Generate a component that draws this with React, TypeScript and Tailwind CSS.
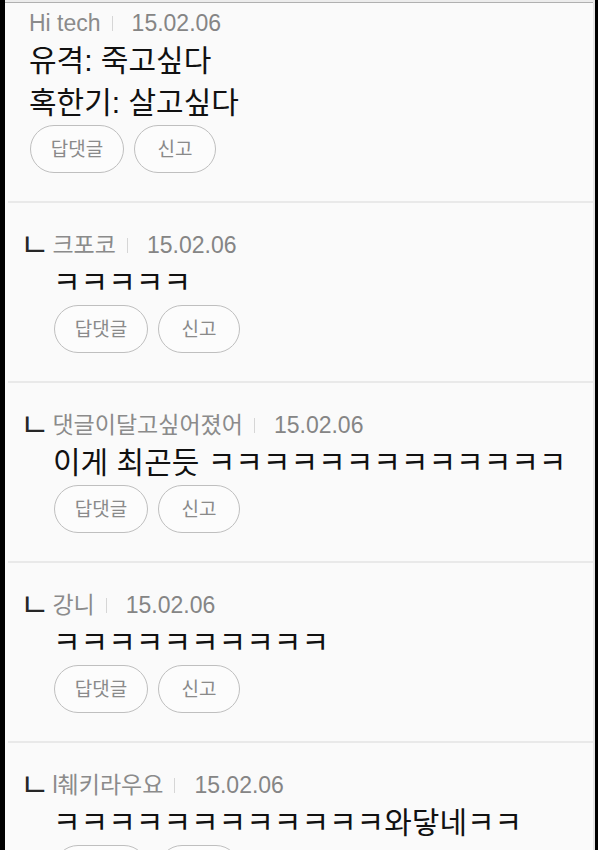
import React from 'react';

type Comment = {
  id: number;
  reply: boolean;
  name: string;
  date: string;
  lines: string[];
};

const comments: Comment[] = [
  { id: 1, reply: false, name: 'Hi tech', date: '15.02.06', lines: ['유격: 죽고싶다', '혹한기: 살고싶다'] },
  { id: 2, reply: true, name: '크포코', date: '15.02.06', lines: ['ㅋㅋㅋㅋㅋ'] },
  { id: 3, reply: true, name: '댓글이달고싶어졌어', date: '15.02.06', lines: ['이게 최곤듯 ' + 'ㅋ'.repeat(13)] },
  { id: 4, reply: true, name: '강니', date: '15.02.06', lines: ['ㅋ'.repeat(10)] },
  { id: 5, reply: true, name: 'l췌키라우요', date: '15.02.06', lines: ['ㅋ'.repeat(12) + '와닿네ㅋㅋ'] },
];

const PillButton = ({ label, width }: { label: string; width: string }) => (
  <button
    className={`${width} h-[48px] rounded-full border-[1.5px] border-[#bfbfbf] bg-[#fcfcfc] text-[19px] leading-none text-[#8a8a8a]`}
  >
    {label}
  </button>
);

const CommentRow = ({ c, first }: { c: Comment; first: boolean }) => (
  <div className={`${first ? 'pt-[6px] pl-[24px]' : 'pt-[28px] pl-[15px]'} pb-[28px]`}>
    {/* meta line */}
    <div className="flex items-center text-[23px] leading-[28px] whitespace-pre">
      {c.reply && <span className="text-[32px] text-[#262626] mr-[3px]">ㄴ</span>}
      <span className="text-[#8b8b8b]">{c.name}</span>
      <span className="inline-block w-px h-[15px] bg-[#d6d6d6] ml-[11px] mr-[19px]" />
      <span className="text-[#858585]">{c.date}</span>
    </div>

    <div className={c.reply ? 'ml-[33px]' : ''}>
      <div className="mt-[3px] text-[30px] leading-[42px] text-[#111111] whitespace-pre">
        {c.lines.map((l, i) => (
          <div key={i}>{l}</div>
        ))}
      </div>
      <div className="mt-px flex gap-[10px] ml-px">
        <PillButton label="답댓글" width="w-[94px]" />
        <PillButton label="신고" width="w-[82px]" />
      </div>
    </div>
  </div>
);

export default function App() {
  return (
    <div
      className="w-[598px] h-[850px] overflow-hidden bg-black pl-[5px] pr-[3px]"
      style={{ fontFamily: "'Liberation Sans', 'Noto Sans CJK KR', sans-serif" }}
    >
      <div className="h-full bg-[#fafafa] border-r-2 border-[#e6e6e6]">
        <div className="h-[2px] bg-[#ececec]" />
        <div className="border-t border-[#b0b0b0]">
          {comments.map((c, i) => (
            <div key={c.id}>
              <CommentRow c={c} first={i === 0} />
              <div className="ml-[3px] h-[2px] bg-[#e9e9e9]" />
            </div>
          ))}
        </div>
      </div>
    </div>
  );
}
